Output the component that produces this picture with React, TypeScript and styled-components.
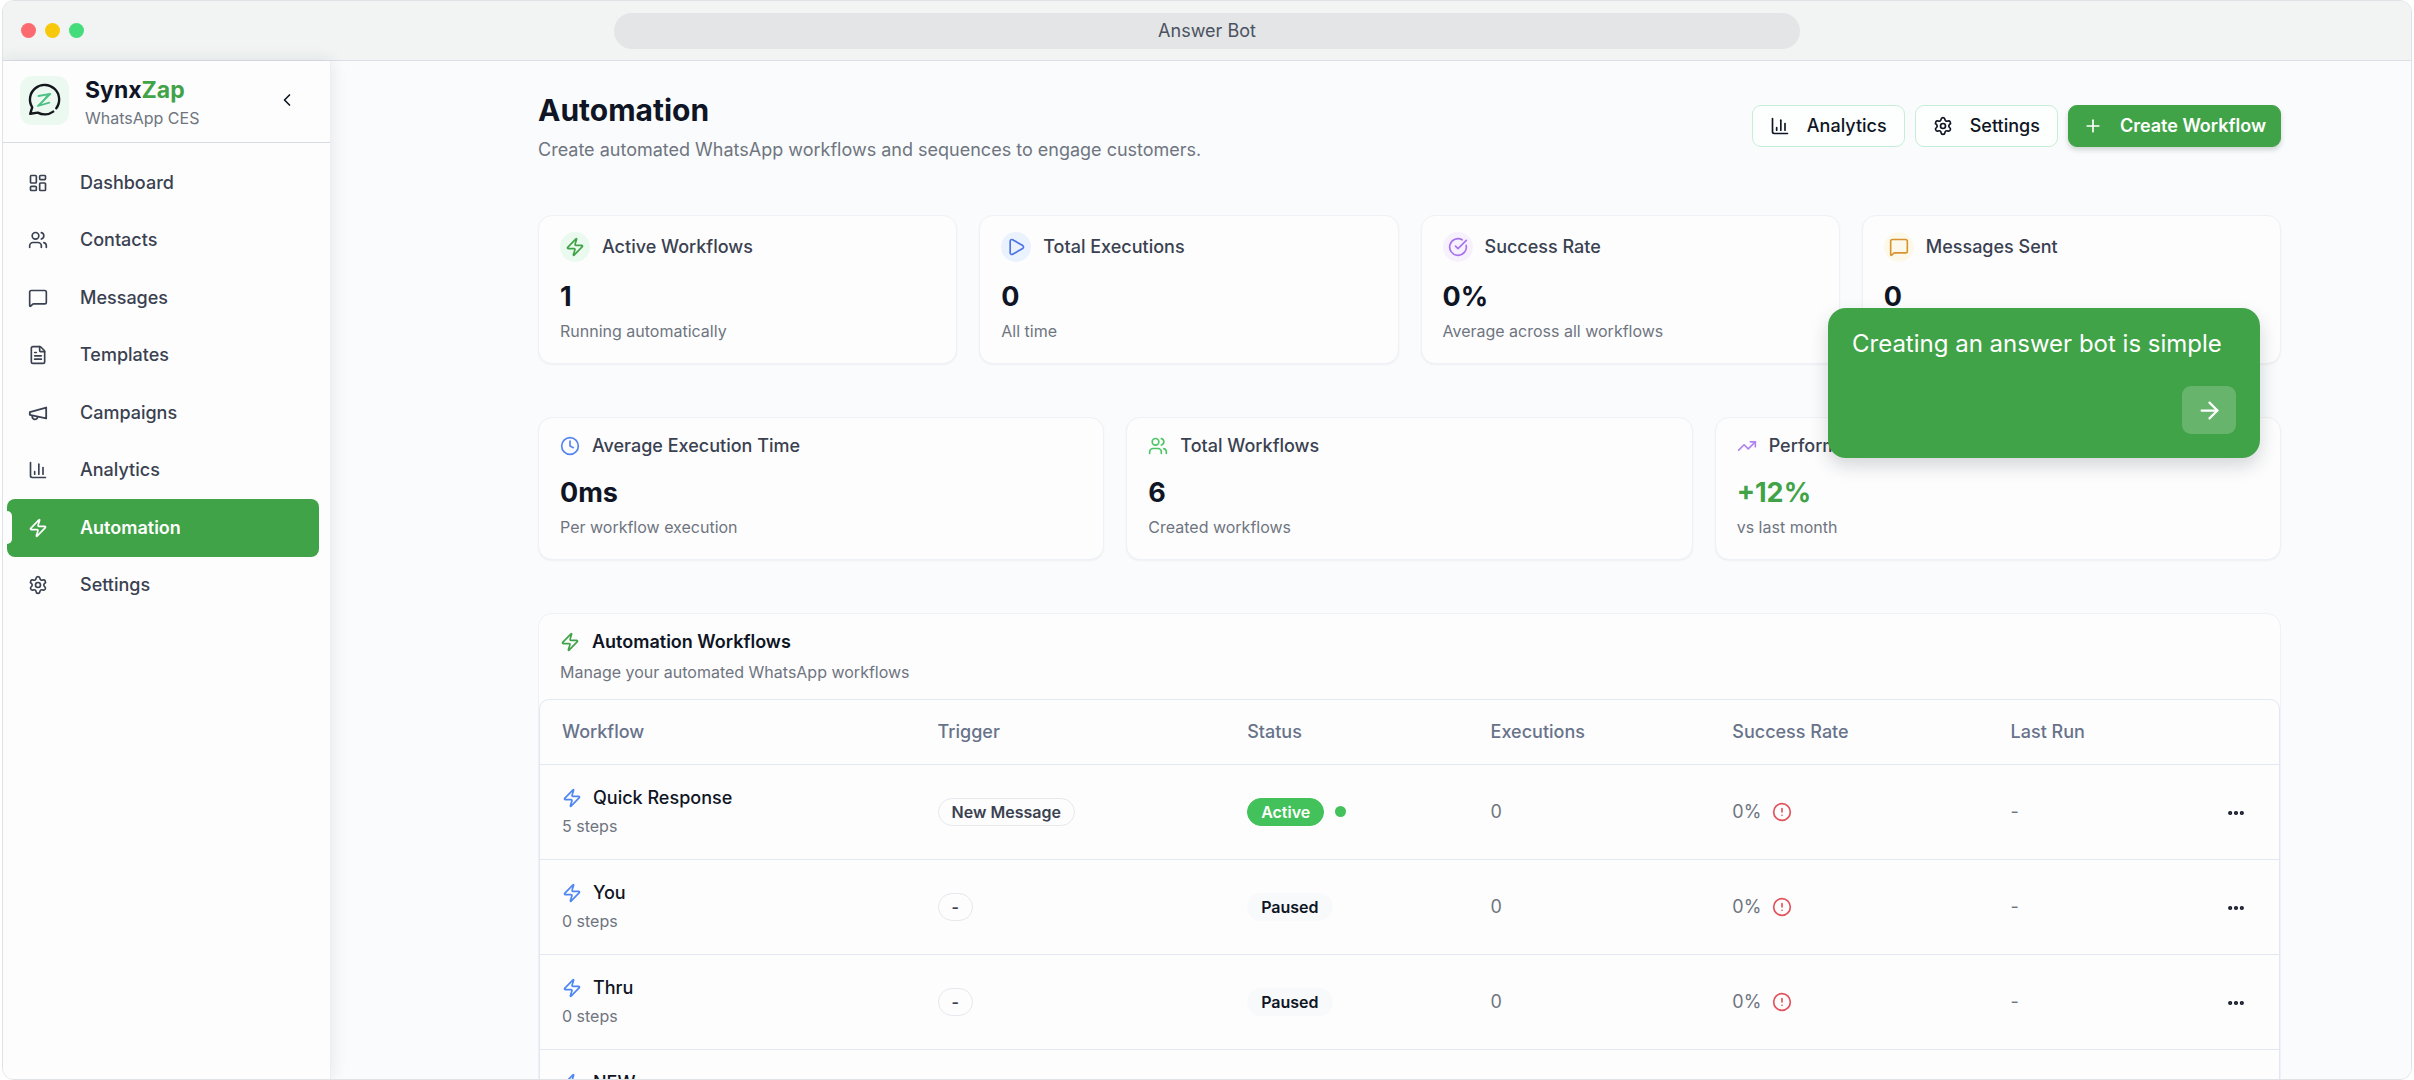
import React from "react";
import styled, { createGlobalStyle } from "styled-components";
import {
  ArrowRight,
  ChartColumn,
  ChevronLeft,
  CircleAlert,
  CircleCheckBig,
  Clock,
  Ellipsis,
  FileText,
  LayoutDashboard,
  MessageSquare,
  Play,
  Plus,
  Settings,
  TrendingUp,
  Users,
  Zap,
} from "lucide-react";

const color = {
  green: "#41a348",
  badgeGreen: "#43c15a",
  ink: "#0f1524",
  text: "#3a4150",
  muted: "#6f7580",
  head: "#68738a",
  line: "#e3e7f3",
  page: "#f9fbfc",
};

const GlobalStyle = createGlobalStyle`
  *, *::before, *::after { box-sizing: border-box; }
  body {
    margin: 0;
    background: #ffffff;
    color: ${color.ink};
    font-family: Inter, "Liberation Sans", sans-serif;
    font-size: 18px;
    line-height: 24px;
  }
  button { font: inherit; color: inherit; cursor: pointer; }
  h1, h2, p { margin: 0; }
`;

const Frame = styled.div`
  height: 100vh;
  margin: 0 2px;
  border: 1px solid #dfe3e6;
  border-radius: 12px;
  overflow: hidden;
  display: flex;
  flex-direction: column;
  position: relative;
`;

const TitleBar = styled.header`
  flex: none;
  height: 60px;
  padding: 0 18px;
  display: grid;
  grid-template-columns: 1fr minmax(0, 1186px) 1fr;
  align-items: center;
  background: #f1f4f3;
  border-bottom: 1px solid #dcdfe6;
`;

const Lights = styled.div`
  display: flex;
  gap: 9px;
`;

const Light = styled.span<{ $fill: string }>`
  width: 15px;
  height: 15px;
  border-radius: 50%;
  background: ${(p) => p.$fill};
`;

const Address = styled.div`
  height: 36px;
  border-radius: 18px;
  background: #e3e5e6;
  color: #4b5260;
  text-align: center;
  line-height: 36px;
`;

const Body = styled.div`
  flex: 1;
  min-height: 0;
  display: flex;
`;

const Sidebar = styled.aside`
  flex: none;
  width: 328px;
  background: #fdfdfe;
  border-right: 1px solid #eceef2;
  box-shadow: 0 0 16px rgba(30, 40, 60, 0.1);
  z-index: 1;
`;

const Brand = styled.div`
  height: 82px;
  padding: 0 33px 3px 17px;
  display: flex;
  align-items: center;
  gap: 16px;
  border-bottom: 1px solid #d5dde2;
`;

const LogoBox = styled.span`
  width: 49px;
  height: 49px;
  border-radius: 12px;
  background: #ecf9f0;
  display: grid;
  place-items: center;
`;

const BrandText = styled.div`
  flex: 1;
  padding-top: 4px;
`;

const BrandName = styled.p`
  font-size: 23px;
  line-height: 32px;
  font-weight: 700;
  span { color: ${color.green}; }
`;

const BrandNote = styled.p`
  font-size: 16px;
  line-height: 24px;
  color: ${color.muted};
`;

const IconButton = styled.button<{ $wide?: boolean }>`
  width: ${(p) => (p.$wide ? 42 : 20)}px;
  border: 0;
  padding: 0;
  background: none;
  display: inline-grid;
  place-items: center;
  vertical-align: middle;
`;

const Nav = styled.nav`
  height: 471px;
  padding: 11px 11px 0 4px;
  display: grid;
  grid-auto-rows: minmax(0, 1fr);
`;

const NavItem = styled.a<{ $active?: boolean }>`
  position: relative;
  padding: 0 21px;
  display: flex;
  align-items: center;
  gap: 32px;
  border-radius: 8px;
  font-weight: ${(p) => (p.$active ? 600 : 500)};
  color: ${(p) => (p.$active ? "#ffffff" : color.text)};
  background: ${(p) => (p.$active ? color.green : "transparent")};
  text-decoration: none;
  &::before {
    content: "";
    display: ${(p) => (p.$active ? "block" : "none")};
    position: absolute;
    left: 0;
    top: 12px;
    width: 5px;
    height: 33px;
    border-radius: 0 5px 5px 0;
    background: #fdfdfe;
  }
`;

const Main = styled.main`
  flex: 1;
  min-width: 0;
  overflow: hidden;
  padding: 32px 130px 0 207px;
  background: ${color.page};
`;

const PageHead = styled.div`
  display: flex;
  justify-content: space-between;
  align-items: flex-start;
  height: 122px;
`;

const PageTitle = styled.h1`
  font-size: 30px;
  line-height: 34px;
  font-weight: 700;
  margin-bottom: 11px;
`;

const Lead = styled.p`
  color: ${color.muted};
`;

const Actions = styled.div`
  display: flex;
  gap: 10px;
  padding-top: 12px;
`;

const Action = styled.button<{ $primary?: boolean }>`
  height: 42px;
  padding: 0 ${(p) => (p.$primary ? 14 : 17)}px;
  display: inline-flex;
  align-items: center;
  gap: 17px;
  border-radius: 9px;
  font-weight: ${(p) => (p.$primary ? 600 : 500)};
  border: 1px solid ${(p) => (p.$primary ? color.green : "#c6eed6")};
  background: ${(p) => (p.$primary ? color.green : "#fdfefe")};
  color: ${(p) => (p.$primary ? "#ffffff" : color.ink)};
  box-shadow: ${(p) => (p.$primary ? "0 3px 5px rgba(20, 40, 30, 0.18)" : "none")};
`;

const CardGrid = styled.section<{ $cols: number }>`
  display: grid;
  grid-template-columns: repeat(${(p) => p.$cols}, minmax(0, 1fr));
  gap: 22px;
  margin-bottom: 53px;
`;

const Card = styled.article`
  padding: 16px 21px 20px;
  border: 1px solid #eef1f5;
  border-radius: 14px;
  background: #fdfdfe;
  box-shadow: 0 1px 2px rgba(30, 40, 60, 0.05);
`;

const CardTitle = styled.h2<{ $tall?: boolean }>`
  height: ${(p) => (p.$tall ? 30 : 24)}px;
  display: flex;
  align-items: center;
  gap: 12px;
  font-size: 18px;
  font-weight: 500;
  color: ${color.text};
`;

const IconDisc = styled.span<{ $tint: string }>`
  width: 30px;
  height: 30px;
  border-radius: 50%;
  display: grid;
  place-items: center;
  background: ${(p) => p.$tint};
`;

const Value = styled.p<{ $tone?: string }>`
  margin: 18px 0 5px;
  font-size: 27px;
  line-height: 34px;
  font-weight: 700;
  color: ${(p) => p.$tone ?? color.ink};
`;

const Note = styled.p`
  font-size: 16px;
  line-height: 24px;
  color: ${color.muted};
`;

const Panel = styled.section`
  border: 1px solid #eef1f5;
  border-radius: 14px;
  background: #fdfdfe;
`;

const PanelHead = styled.div`
  padding: 16px 21px 15px;
`;

const PanelTitle = styled.h2`
  display: flex;
  align-items: center;
  gap: 12px;
  margin-bottom: 6px;
  font-size: 18px;
  font-weight: 600;
`;

const TableBox = styled.div`
  border: 1px solid ${color.line};
  border-radius: 10px;
  overflow: hidden;
`;

const Table = styled.table`
  width: 100%;
  table-layout: fixed;
  border-collapse: collapse;
`;

const Th = styled.th<{ $width: string }>`
  width: ${(p) => p.$width};
  height: 64px;
  padding: 0 22px;
  text-align: left;
  font-weight: 500;
  color: ${color.head};
  border-bottom: 1px solid ${color.line};
`;

const Td = styled.td<{ $end?: boolean }>`
  height: 95px;
  padding: 0 22px;
  color: ${color.muted};
  text-align: ${(p) => (p.$end ? "right" : "left")};
  border-bottom: 1px solid ${color.line};
`;

const Inline = styled.div`
  display: flex;
  align-items: center;
  gap: 11px;
`;

const FlowName = styled(Inline)`
  margin-bottom: 4px;
  font-weight: 500;
  color: ${color.ink};
`;

const Badge = styled.span<{ $kind: "outline" | "active" | "paused" }>`
  display: inline-flex;
  align-items: center;
  height: 28px;
  padding: 0 13px;
  border-radius: 14px;
  font-size: 16px;
  line-height: 22px;
  font-weight: 600;
  border: 1px solid ${(p) => ({ outline: "#e6e8ec", active: color.badgeGreen, paused: "#f8f9fb" })[p.$kind]};
  background: ${(p) => ({ outline: "transparent", active: color.badgeGreen, paused: "#f8f9fb" })[p.$kind]};
  color: ${(p) => ({ outline: color.text, active: "#ffffff", paused: color.ink })[p.$kind]};
`;

const Pulse = styled.span`
  width: 11px;
  height: 11px;
  border-radius: 50%;
  background: ${color.badgeGreen};
`;

const Tour = styled.div`
  position: absolute;
  z-index: 2;
  top: 307px;
  right: 151px;
  width: 432px;
  height: 150px;
  padding: 21px 24px 24px;
  display: flex;
  flex-direction: column;
  justify-content: space-between;
  border-radius: 18px;
  background: ${color.green};
  color: #ffffff;
  font-size: 24px;
  line-height: 30px;
  font-weight: 400;
  box-shadow: 0 8px 18px rgba(30, 40, 40, 0.18);
`;

const TourNext = styled.button`
  align-self: flex-end;
  width: 54px;
  height: 48px;
  border: 0;
  padding: 0;
  border-radius: 9px;
  display: grid;
  place-items: center;
  background: rgba(255, 255, 255, 0.2);
`;

const Logo = () => (
  <svg width="34" height="34" viewBox="0 0 34 34" fill="none" strokeLinecap="round" strokeLinejoin="round">
    <path
      d="M28.300 25.200A14.600 14.600 0 1 0 4.200 24.300L2.200 30.800L9.800 29.600C14.600 32.200 20.800 31.800 25.200 28.600"
      stroke="#14181c"
      strokeWidth="2.400"
    />
    <path d="M10.500 13L22.300 10.800L10 23L21.300 19.600" stroke="#4cc084" strokeWidth="1.800" />
    <path d="M19 12.500L13 20.500" stroke="#4cc084" strokeWidth="1.200" />
  </svg>
);

const Megaphone = ({ size = 24 }: { size?: number }) => (
  <svg
    width={size}
    height={size}
    viewBox="1 1 22 22"
    fill="none"
    stroke="currentColor"
    strokeWidth="2"
    strokeLinecap="round"
    strokeLinejoin="round"
  >
    <path d="m3 11 18-5v12L3 14v-3z" />
    <path d="M11.6 16.8a3 3 0 1 1-5.800-1.600" />
  </svg>
);

const navItems: { label: string; icon: React.ComponentType<{ size?: number }>; active?: boolean }[] = [
  { label: "Dashboard", icon: LayoutDashboard },
  { label: "Contacts", icon: Users },
  { label: "Messages", icon: MessageSquare },
  { label: "Templates", icon: FileText },
  { label: "Campaigns", icon: Megaphone },
  { label: "Analytics", icon: ChartColumn },
  { label: "Automation", icon: Zap, active: true },
  { label: "Settings", icon: Settings },
];

const stats = [
  { title: "Active Workflows", value: "1", note: "Running automatically", icon: Zap, stroke: color.green, tint: "#ebfaef" },
  { title: "Total Executions", value: "0", note: "All time", icon: Play, stroke: "#4f74e3", tint: "#eaf2fd" },
  { title: "Success Rate", value: "0%", note: "Average across all workflows", icon: CircleCheckBig, stroke: "#a873ee", tint: "#f7f1fe" },
  { title: "Messages Sent", value: "0", icon: MessageSquare, stroke: "#d99432", tint: "#fdf9ea" },
];

const summary = [
  { title: "Average Execution Time", value: "0ms", note: "Per workflow execution", icon: Clock, stroke: "#5585ee" },
  { title: "Total Workflows", value: "6", note: "Created workflows", icon: Users, stroke: "#4cc566" },
  { title: "Performance", value: "+12%", note: "vs last month", icon: TrendingUp, stroke: "#b083f0", tone: color.green },
];

const columns = [
  { label: "Workflow", width: "21.6%" },
  { label: "Trigger", width: "17.8%" },
  { label: "Status", width: "14%" },
  { label: "Executions", width: "13.9%" },
  { label: "Success Rate", width: "16%" },
  { label: "Last Run", width: "10.7%" },
  { label: "", width: "6%" },
];

const workflows = [
  { name: "Quick Response", steps: 5, trigger: "New Message", active: true },
  { name: "You", steps: 0, trigger: "-", active: false },
  { name: "Thru", steps: 0, trigger: "-", active: false },
  { name: "NEW", steps: 0, trigger: "-", active: false },
];

export default function App() {
  return (
    <>
      <GlobalStyle />
      <Frame>
        <TitleBar>
          <Lights>
            <Light $fill="#fb6a6f" />
            <Light $fill="#f8c80c" />
            <Light $fill="#45dc7c" />
          </Lights>
          <Address>Answer Bot</Address>
        </TitleBar>
        <Body>
          <Sidebar>
            <Brand>
              <LogoBox>
                <Logo />
              </LogoBox>
              <BrandText>
                <BrandName>
                  Synx<span>Zap</span>
                </BrandName>
                <BrandNote>WhatsApp CES</BrandNote>
              </BrandText>
              <IconButton aria-label="Collapse sidebar">
                <ChevronLeft size={20} />
              </IconButton>
            </Brand>
            <Nav>
              {navItems.map(({ label, icon: Icon, active }) => (
                <NavItem key={label} href="#" $active={active}>
                  <Icon size={20} />
                  {label}
                </NavItem>
              ))}
            </Nav>
          </Sidebar>
          <Main>
            <PageHead>
              <div>
                <PageTitle>Automation</PageTitle>
                <Lead>Create automated WhatsApp workflows and sequences to engage customers.</Lead>
              </div>
              <Actions>
                <Action>
                  <ChartColumn size={20} />
                  Analytics
                </Action>
                <Action>
                  <Settings size={20} />
                  Settings
                </Action>
                <Action $primary>
                  <Plus size={20} />
                  Create Workflow
                </Action>
              </Actions>
            </PageHead>
            <CardGrid $cols={4}>
              {stats.map(({ title, value, note, icon: Icon, stroke, tint }) => (
                <Card key={title}>
                  <CardTitle $tall>
                    <IconDisc $tint={tint}>
                      <Icon size={20} color={stroke} />
                    </IconDisc>
                    {title}
                  </CardTitle>
                  <Value>{value}</Value>
                  {note && <Note>{note}</Note>}
                </Card>
              ))}
            </CardGrid>
            <CardGrid $cols={3}>
              {summary.map(({ title, value, note, icon: Icon, stroke, tone }) => (
                <Card key={title}>
                  <CardTitle>
                    <Icon size={20} color={stroke} />
                    {title}
                  </CardTitle>
                  <Value $tone={tone}>{value}</Value>
                  <Note>{note}</Note>
                </Card>
              ))}
            </CardGrid>
            <Panel>
              <PanelHead>
                <PanelTitle>
                  <Zap size={20} color={color.green} />
                  Automation Workflows
                </PanelTitle>
                <Note>Manage your automated WhatsApp workflows</Note>
              </PanelHead>
              <TableBox>
                <Table>
                  <thead>
                    <tr>
                      {columns.map((c) => (
                        <Th key={c.label} $width={c.width}>
                          {c.label}
                        </Th>
                      ))}
                    </tr>
                  </thead>
                  <tbody>
                    {workflows.map((w) => (
                      <tr key={w.name}>
                        <Td>
                          <FlowName>
                            <Zap size={20} color="#4f86f2" />
                            {w.name}
                          </FlowName>
                          <Note>{w.steps} steps</Note>
                        </Td>
                        <Td>
                          <Badge $kind="outline">{w.trigger}</Badge>
                        </Td>
                        <Td>
                          <Inline>
                            <Badge $kind={w.active ? "active" : "paused"}>{w.active ? "Active" : "Paused"}</Badge>
                            {w.active && <Pulse />}
                          </Inline>
                        </Td>
                        <Td>0</Td>
                        <Td>
                          <Inline>
                            0%
                            <CircleAlert size={20} color="#e2525c" />
                          </Inline>
                        </Td>
                        <Td>-</Td>
                        <Td $end>
                          <IconButton $wide aria-label={`Options for ${w.name}`}>
                            <Ellipsis size={20} strokeWidth={3} color={color.ink} />
                          </IconButton>
                        </Td>
                      </tr>
                    ))}
                  </tbody>
                </Table>
              </TableBox>
            </Panel>
          </Main>
        </Body>
        <Tour role="dialog" aria-label="Product tour">
          <p>Creating an answer bot is simple</p>
          <TourNext aria-label="Next">
            <ArrowRight size={27} />
          </TourNext>
        </Tour>
      </Frame>
    </>
  );
}
